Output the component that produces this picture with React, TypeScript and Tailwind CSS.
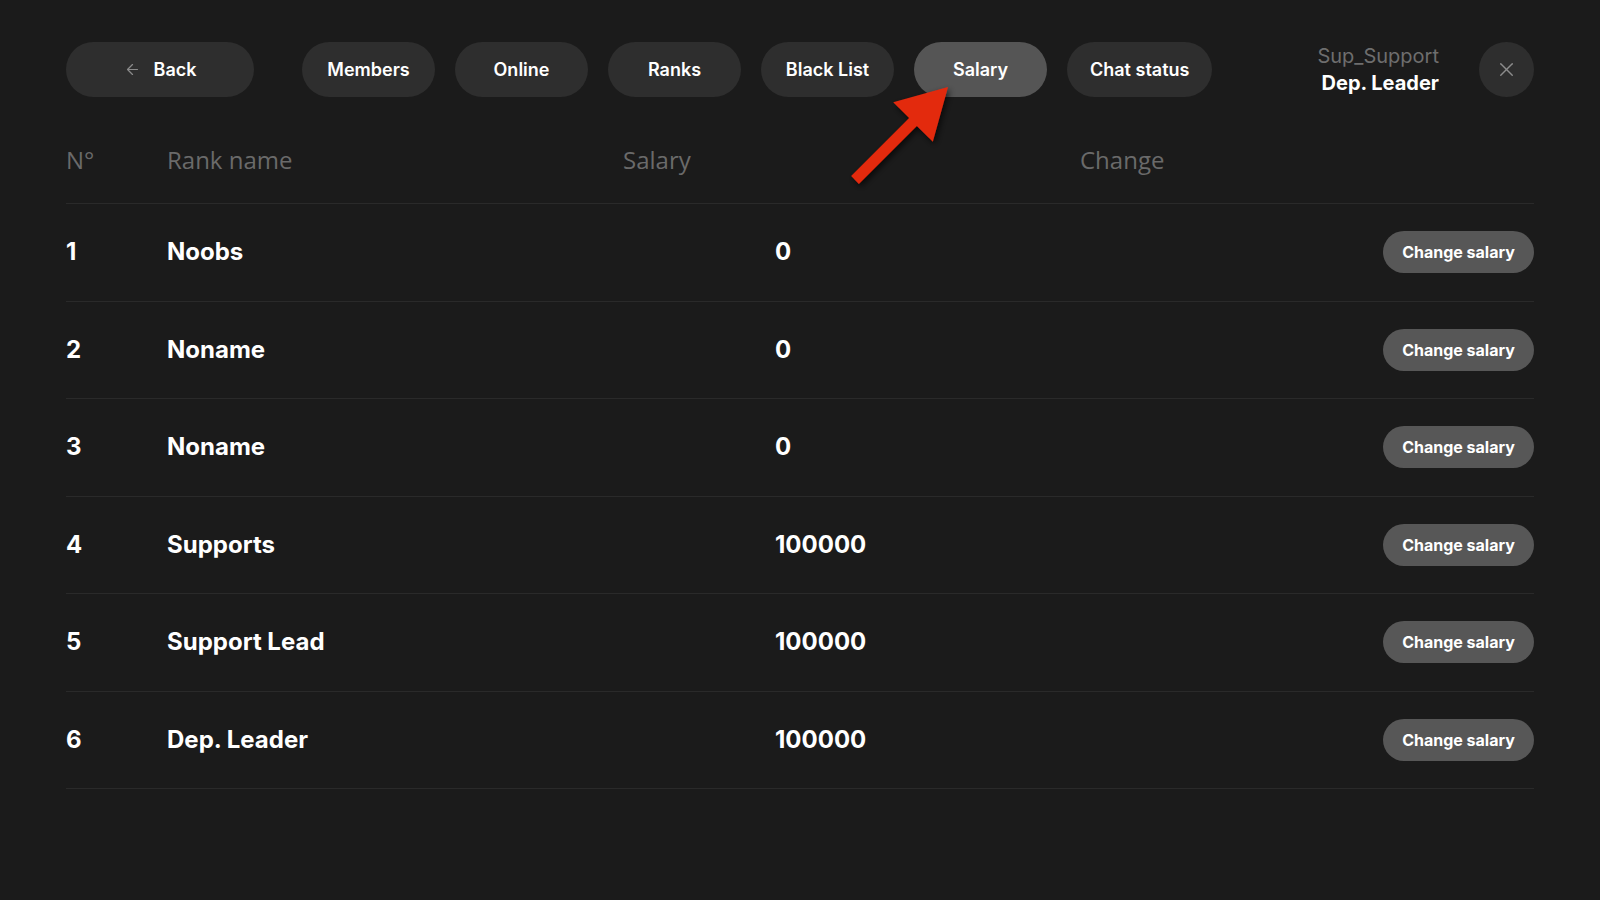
import React from 'react';
import { ArrowLeft, X } from 'lucide-react';

const tabs = ['Members', 'Online', 'Ranks', 'Black List', 'Salary', 'Chat status'];

const ranks = [
  { id: 1, name: 'Noobs', salary: '0' },
  { id: 2, name: 'Noname', salary: '0' },
  { id: 3, name: 'Noname', salary: '0' },
  { id: 4, name: 'Supports', salary: '100000' },
  { id: 5, name: 'Support Lead', salary: '100000' },
  { id: 6, name: 'Dep. Leader', salary: '100000' },
];

const App: React.FC = () => {
  return (
    <div className="relative w-full h-[900px] bg-[#1b1b1b] px-[66px] pt-[42px] font-['Inter',sans-serif] text-white overflow-hidden">
      {/* Top nav */}
      <div className="flex items-center h-[55px]">
        <button className="w-[188px] h-[55px] rounded-full bg-[#2e2e2e] flex items-center justify-center gap-[13px] text-[18px] font-semibold">
          <ArrowLeft size={17} strokeWidth={1.75} className="text-[#8a8a8a]" />
          <span>Back</span>
        </button>

        <div className="flex items-center gap-[20px] ml-[48px]">
          {tabs.map(t => (
            <button
              key={t}
              className={`h-[55px] min-w-[133px] px-[23px] rounded-full flex items-center justify-center text-[18px] font-semibold ${
                t === 'Salary' ? 'bg-[#555555]' : 'bg-[#2e2e2e]'
              }`}
            >
              {t}
            </button>
          ))}
        </div>

        <div className="ml-auto flex items-center gap-[40px]">
          <div className="flex flex-col items-end leading-[27px]">
            <span className="text-[20px] text-[#6e6e6e]">Sup_Support</span>
            <span className="text-[20px] font-bold">Dep. Leader</span>
          </div>
          <button className="w-[55px] h-[55px] rounded-full bg-[#2e2e2e] flex items-center justify-center">
            <X size={23} strokeWidth={1.5} className="text-[#8c8c8c]" />
          </button>
        </div>
      </div>

      {/* Table header */}
      <div className="flex pt-[49px] pb-[29px] border-b-[1.5px] border-[#2a2a2a] font-['Open_Sans',sans-serif] text-[24px] leading-[28px] text-[#6a6a6a]">
        <div className="w-[101px]">N°</div>
        <div className="w-[456px]">Rank name</div>
        <div className="w-[457px]">Salary</div>
        <div>Change</div>
      </div>

      {/* Rows */}
      {ranks.map(r => (
        <div key={r.id} className="flex items-center h-[97.5px] border-b-[1.5px] border-[#2a2a2a] text-[24px] font-bold">
          <div className="w-[101px]">{r.id}</div>
          <div className="w-[608px]">{r.name}</div>
          <div className="flex-1">{r.salary}</div>
          <button className="w-[151px] h-[42px] rounded-full bg-[#575757] text-[16px] font-bold">
            Change salary
          </button>
        </div>
      ))}

      {/* Red annotation arrow */}
      <svg className="absolute left-[830px] top-[70px]" width="140" height="130" viewBox="0 0 140 130">
        <defs>
          <filter id="sh" x="-30%" y="-30%" width="160%" height="160%">
            <feDropShadow dx="2" dy="3" stdDeviation="3" floodColor="#000" floodOpacity="0.65" />
          </filter>
        </defs>
        <polygon
          filter="url(#sh)"
          fill="#e3290f"
          points="118,17 102.8,71.8 86.9,55.9 28.9,113.9 21.1,106.1 79.1,48.1 63.2,32.2"
        />
      </svg>
    </div>
  );
};

export default App;
